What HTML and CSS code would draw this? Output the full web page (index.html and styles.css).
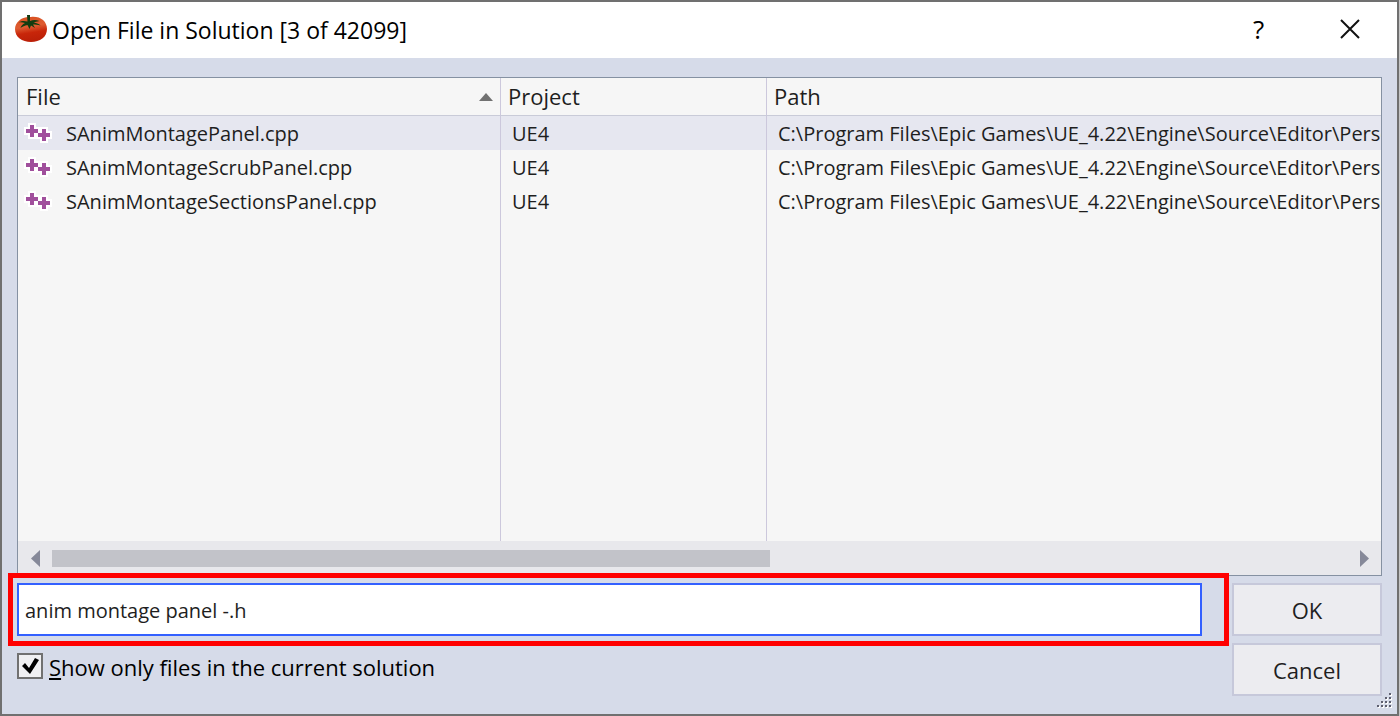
FILE: index.html
```html
<!DOCTYPE html>
<html lang="en">
<head>
  <meta charset="UTF-8" />
  <meta name="viewport" content="width=device-width, initial-scale=1" />
  <title>Open File in Solution</title>
  <link rel="stylesheet" href="styles.css">
</head>
<body>
  <!-- shared icon for C++ source files -->
  <svg class="defs" width="0" height="0">
    <symbol id="cpp-icon" viewBox="0 0 28 20">
      <path fill="#fff" stroke="#fff" stroke-width="4" d="M6 2h4v4h4v4h-4v4H6v-4H2V6h4zM18 6h4v4h4v4h-4v4h-4v-4h-4v-4h4z" />
      <path fill="#a04f9c" d="M6 2h4v4h4v4h-4v4H6v-4H2V6h4zM18 6h4v4h4v4h-4v4h-4v-4h-4v-4h4z" />
    </symbol>
  </svg>

  <div class="dialog">
    <header class="titlebar">
      <svg class="app-icon" viewBox="0 0 32 28">
        <defs>
          <linearGradient id="tomato" x1="0" y1="0" x2="0.2" y2="1">
            <stop offset="0" stop-color="#d8501f" />
            <stop offset="0.45" stop-color="#de5c32" />
            <stop offset="0.7" stop-color="#c8260a" />
            <stop offset="1" stop-color="#bc2008" />
          </linearGradient>
        </defs>
        <path fill="url(#tomato)" d="M16 2C25 1 32 6 32 14c0 8-7 13-16 13S0 22 0 14C0 7 7 1 16 2z" />
        <path fill="#123c10" d="M12 0h3v6c3-1.500 6-1.500 9.500 0-3 .5-4.500 1-6 1.500 3.500 .5 6 1.500 7 3-3-.8-5-1-7.500-1l2 3.500-4-2.500-1.500 3.500-2-4c-3 .5-5 1.500-7 3 .5-2 2-4 4.500-5-2.500-.8-4.500-.8-6.500-.5 2-1.500 5-2 9-1z" />
      </svg>
      <h1 class="title">Open File in Solution [3 of 42099]</h1>
      <button type="button" class="title-btn" aria-label="Help">?</button>
      <button type="button" class="title-btn" aria-label="Close">
        <svg width="20" height="20" viewBox="0 0 20 20"><path stroke="#111" stroke-width="2" d="M1 1l18 18M19 1L1 19" /></svg>
      </button>
    </header>

    <form class="content">
      <div class="file-list">
        <table class="files">
          <thead>
            <tr>
              <th class="col-file">
                <span class="sortable">File
                  <svg class="sort-arrow" viewBox="0 0 14 8"><path fill="#717171" d="M0 8l7-8 7 8z" /></svg>
                </span>
              </th>
              <th class="col-project">Project</th>
              <th>Path</th>
            </tr>
          </thead>
          <tbody>
            <tr class="selected">
              <td><span class="name"><svg class="file-icon"><use href="#cpp-icon" /></svg>SAnimMontagePanel.cpp</span></td>
              <td>UE4</td>
              <td>C:\Program Files\Epic Games\UE_4.22\Engine\Source\Editor\Perso</td>
            </tr>
            <tr>
              <td><span class="name"><svg class="file-icon"><use href="#cpp-icon" /></svg>SAnimMontageScrubPanel.cpp</span></td>
              <td>UE4</td>
              <td>C:\Program Files\Epic Games\UE_4.22\Engine\Source\Editor\Perso</td>
            </tr>
            <tr>
              <td><span class="name"><svg class="file-icon"><use href="#cpp-icon" /></svg>SAnimMontageSectionsPanel.cpp</span></td>
              <td>UE4</td>
              <td>C:\Program Files\Epic Games\UE_4.22\Engine\Source\Editor\Perso</td>
            </tr>
            <tr class="filler"><td></td><td></td><td></td></tr>
          </tbody>
        </table>
        <div class="scrollbar">
          <button type="button" class="scroll-btn" aria-label="Scroll left">
            <svg width="9" height="17" viewBox="0 0 9 17"><path fill="#868999" d="M9 0v17L0 8.500z" /></svg>
          </button>
          <div class="track"><div class="thumb"></div></div>
          <button type="button" class="scroll-btn" aria-label="Scroll right">
            <svg width="9" height="17" viewBox="0 0 9 17"><path fill="#868999" d="M0 0v17l9-8.500z" /></svg>
          </button>
        </div>
      </div>

      <div class="controls">
        <div class="search">
          <input type="text" class="search-box" aria-label="Search" value="anim montage panel -.h" />
        </div>
        <button type="submit" class="btn">OK</button>
        <div class="option">
          <input type="checkbox" id="only-solution" checked />
          <label for="only-solution"><u>S</u>how only files in the current solution</label>
        </div>
        <button type="button" class="btn">Cancel</button>
      </div>
    </form>

    <svg class="grip" width="16" height="16" viewBox="0 0 16 16">
      <path fill="#fff" d="M14 2h2v2h-2zM10 6h2v2h-2zM14 6h2v2h-2zM6 10h2v2H6zM10 10h2v2h-2zM14 10h2v2h-2zM2 14h2v2H2zM6 14h2v2H6zM10 14h2v2h-2zM14 14h2v2h-2z" />
      <path fill="#5e6070" d="M13 1h2v2h-2zM9 5h2v2H9zM13 5h2v2h-2zM5 9h2v2H5zM9 9h2v2H9zM13 9h2v2h-2zM1 13h2v2H1zM5 13h2v2H5zM9 13h2v2H9zM13 13h2v2h-2z" />
    </svg>
  </div>
</body>
</html>
```
FILE: styles.css
```css
* {
  box-sizing: border-box;
}
body {
  margin: 0;
  padding-right: 1px;
  background: #c4c4c4;
  color: #1e1e1e;
  font-family: "Open Sans", "Noto Sans", sans-serif;
  font-size: 20px;
  line-height: 30px;
}
button, input {
  font: inherit;
  color: inherit;
}
button {
  padding: 0;
  border: none;
  background: none;
}
.defs {
  position: absolute;
}
.dialog {
  position: relative;
  display: flex;
  flex-direction: column;
  height: 100vh;
  border: 2px solid #707070;
  background: #d6dbe9;
}

/* title bar */
.titlebar {
  display: flex;
  align-items: center;
  height: 56px;
  padding: 0 2px 2px 13px;
  background: #fff;
  color: #000;
}
.app-icon {
  width: 32px;
  height: 28px;
  margin-right: 5px;
}
.title {
  flex: 1;
  margin: 0;
  padding-top: 2px;
  font-size: 23px;
  font-weight: normal;
}
.title-btn {
  display: flex;
  align-items: center;
  justify-content: center;
  width: 91px;
  height: 54px;
  font-size: 26px;
  font-weight: 500;
}

.content {
  flex: 1;
  display: flex;
  flex-direction: column;
  gap: 7px;
  min-height: 0;
  padding: 19px 15px 18px;
}

/* file list */
.file-list {
  flex: 1;
  display: flex;
  flex-direction: column;
  min-height: 0;
  border: 1px solid #8591a2;
  background: #f6f6f6;
}
.files {
  flex: 1;
  width: 100%;
  table-layout: fixed;
  border-collapse: separate;
  border-spacing: 0;
}
.files th, .files td {
  padding: 2px 11px 0;
  border-right: 1px solid #ccc8dc;
  text-align: left;
  white-space: nowrap;
  overflow: hidden;
}
.files th:last-child, .files td:last-child {
  padding-right: 0;
  border-right: none;
}
.files th {
  height: 38px;
  padding: 0 7px 2px;
  border-bottom: 1px solid #c9cbd8;
  font-size: 22px;
  font-weight: normal;
}
.files td {
  height: 34px;
}
.files .filler td {
  height: auto;
}
.files td:first-child {
  padding-left: 6px;
}
.files .col-file {
  width: 483px;
  padding-left: 8px;
}
.col-project {
  width: 266px;
}
.sortable {
  display: flex;
  align-items: center;
  justify-content: space-between;
}
.sort-arrow {
  width: 14px;
  height: 8px;
  margin-top: 2px;
}
.selected {
  background: #e6e7f0;
}
.name {
  display: flex;
  align-items: center;
}
.file-icon {
  width: 28px;
  height: 20px;
  margin: 0 14px 2px 0;
}
.scrollbar {
  display: flex;
  align-items: center;
  gap: 12px;
  height: 34px;
  padding: 0 12px 0 13px;
  background: #e8e8ec;
}
.scroll-btn {
  display: flex;
}
.track {
  flex: 1;
}
.thumb {
  width: 55.4%;
  height: 17px;
  background: #c2c3c9;
}

/* search box, option and buttons */
.controls {
  display: grid;
  grid-template-columns: 1fr 150px;
  gap: 7px 30px;
}
.search {
  position: relative;
}
/* red highlight frame around the search box */
.search::after {
  content: "";
  position: absolute;
  inset: -10px -27px -10px -9px;
  border: 5px solid #f00;
  pointer-events: none;
}
.search-box {
  display: block;
  width: 100%;
  height: 53px;
  padding: 2px 6px 0;
  border: 2px solid #3360ff;
  border-radius: 0;
  outline: none;
  background: #fff;
}
.btn {
  height: 53px;
  border: 2px solid #c6c8da;
  background: #ececf0;
  font-size: 22px;
}
.option {
  display: flex;
  align-items: center;
  gap: 6px;
  height: 46px;
  color: #000;
  font-size: 22px;
}
.option label {
  padding-top: 2px;
}
.option input {
  appearance: none;
  width: 26px;
  height: 26px;
  margin: 0;
  border: 2px solid #717171;
  background: #f0f0f2;
}
.option input:checked::before {
  content: "";
  display: block;
  width: 22px;
  height: 22px;
  background: #000;
  clip-path: polygon(3px 11px, 6px 8px, 10px 13px, 16px 3px, 20px 5px, 11px 19px);
}
.grip {
  position: absolute;
  right: 5px;
  bottom: 6px;
}
```
